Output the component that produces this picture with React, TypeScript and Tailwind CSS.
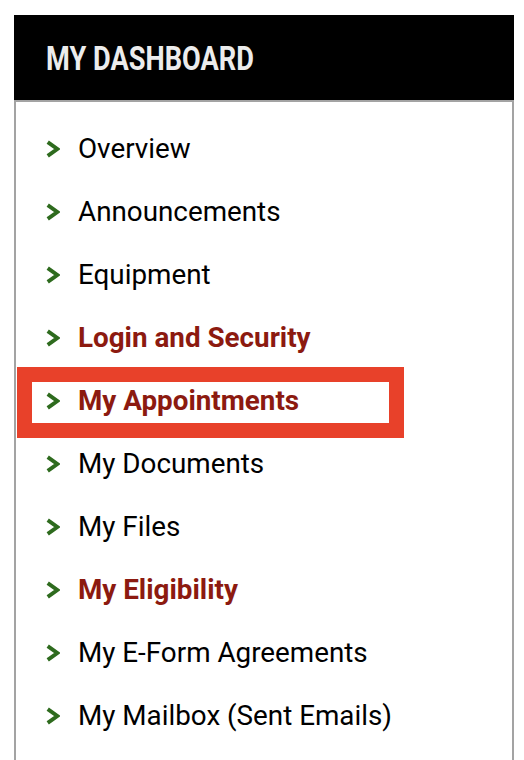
const items = [
  { label: "Overview" },
  { label: "Announcements" },
  { label: "Equipment" },
  { label: "Login and Security", active: true },
  { label: "My Appointments", active: true, marked: true },
  { label: "My Documents" },
  { label: "My Files" },
  { label: "My Eligibility", active: true },
  { label: "My E-Form Agreements" },
  { label: "My Mailbox (Sent Emails)" },
]

function Chevron() {
  return (
    <svg viewBox="0 0 14 17" className="block h-[18px] w-[15px] shrink-0">
      <path d="M2.5 2 L11.5 8.5 L2.5 15" fill="none" stroke="#2e6b1e" strokeWidth="3.6" strokeLinejoin="miter" />
    </svg>
  )
}

export default function App() {
  return (
    <div className="relative h-[760px] overflow-hidden bg-white pt-[15px] pl-[14px] font-['Roboto',sans-serif]">
      <div className="w-[500px]">
        <div className="flex h-[85px] items-center bg-black pl-[32px]">
          <span className="origin-left scale-x-[0.8] text-[34px] leading-none font-bold whitespace-nowrap text-[#ececec]">
            MY DASHBOARD
          </span>
        </div>
        <ul className="min-h-[700px] border-2 border-[#a3a3a3] pt-[15px]">
          {items.map((item) => (
            <li key={item.label} className="relative flex h-[63px] items-center pl-[29px]">
              {item.marked && (
                <div className="pointer-events-none absolute top-[-2px] left-[1px] h-[71px] w-[387px] border-[15px] border-[#e8412a]" />
              )}
              <Chevron />
              <span
                className={
                  item.active
                    ? "ml-[18px] text-[27.8px] font-bold text-[#8c1a10]"
                    : "ml-[18px] text-[27.8px] text-black"
                }
              >
                {item.label}
              </span>
            </li>
          ))}
        </ul>
      </div>
    </div>
  )
}
